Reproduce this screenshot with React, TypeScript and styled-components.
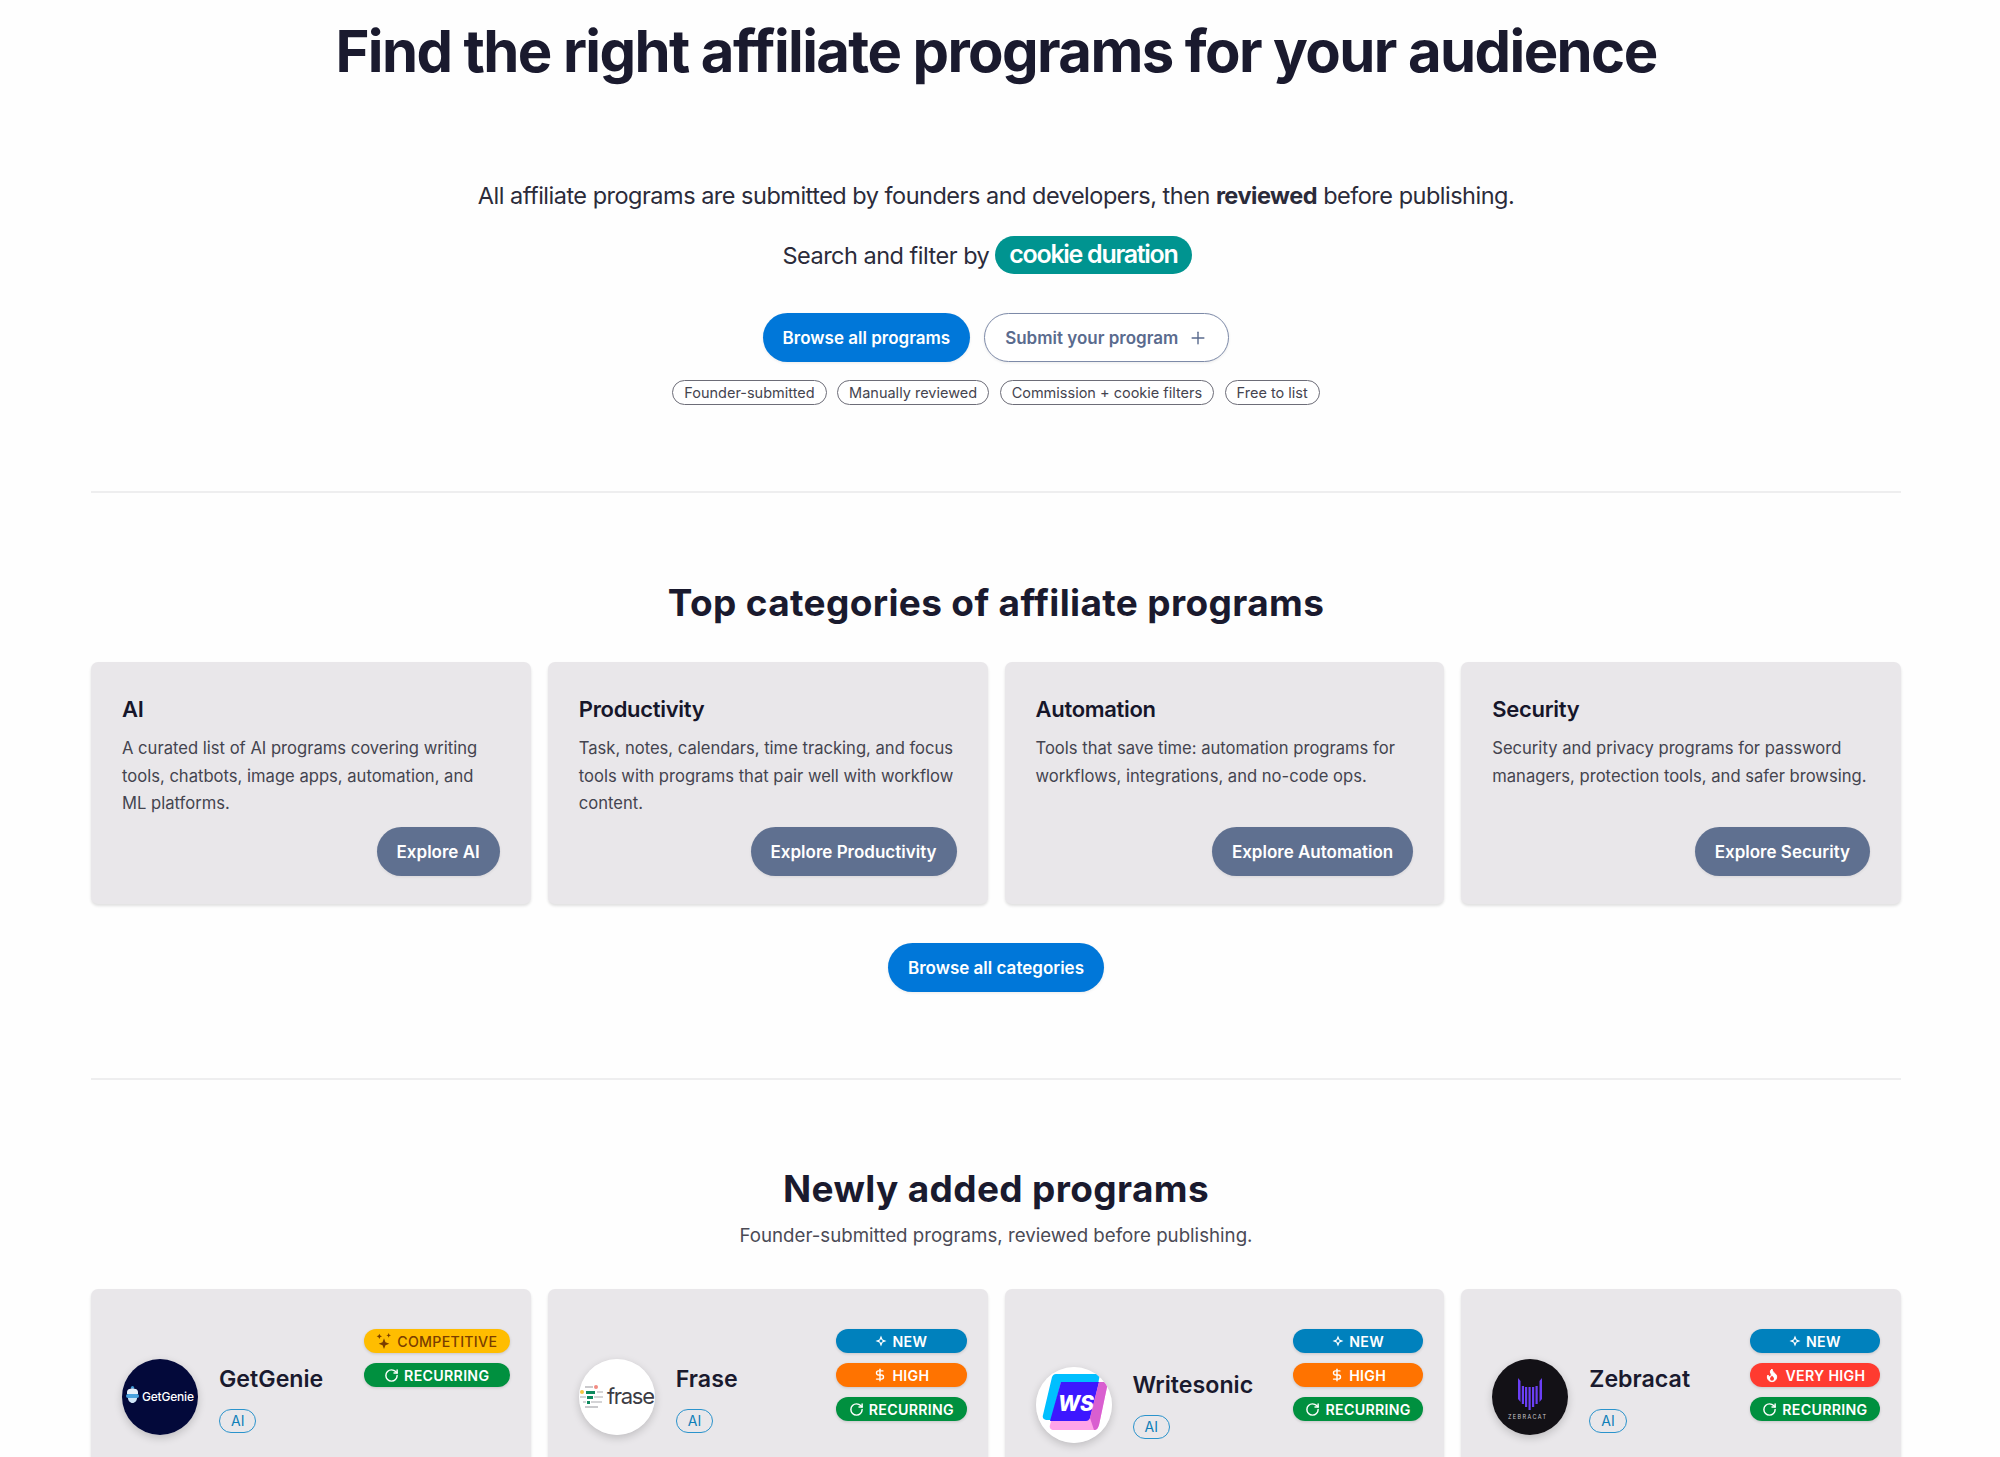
import React from 'react';
import styled, { createGlobalStyle } from 'styled-components';
import { Plus, RotateCw, DollarSign } from 'lucide-react';

type Tone = 'new' | 'high' | 'veryhigh' | 'recurring' | 'competitive';

const GlobalStyle = createGlobalStyle`
  html, body {
    margin: 0;
    height: 1457px;
    overflow: hidden;
    background: #fefefe;
    color: #1a1a2e;
    font-family: Inter, "Liberation Sans", sans-serif;
  }
  * { box-sizing: border-box; }
`;

const Page = styled.div`
  padding: 0 99px 0 91px;
`;

const Hero = styled.header`
  text-align: center;
  padding-top: 16px;
`;

const Title = styled.h1`
  margin: 0;
  font-size: 58px;
  line-height: 70px;
  font-weight: 700;
  letter-spacing: -1.6px;
  color: #1a1a2e;
`;

const Lead = styled.p`
  margin: 92px 0 0;
  font-size: 23.5px;
  line-height: 36px;
  letter-spacing: -0.5px;
  color: #2b2b3a;

  strong {
    font-weight: 700;
  }
`;

const SearchLine = styled.div`
  margin-top: 22px;
  padding-right: 18px;
  display: flex;
  justify-content: center;
  align-items: center;
  gap: 6px;
  font-size: 23.5px;
  letter-spacing: -0.5px;
  color: #2b2b3a;
`;

const Highlight = styled.span`
  background: #009490;
  color: #fff;
  font-weight: 600;
  font-size: 25px;
  letter-spacing: -1.3px;
  height: 38px;
  line-height: 37px;
  padding: 0 14px;
  border-radius: 19px;
`;

const ButtonRow = styled.div`
  margin-top: 39px;
  display: flex;
  justify-content: center;
  gap: 14px;
`;

const PillButton = styled.a<{ $variant: 'primary' | 'outline' | 'muted' }>`
  display: inline-flex;
  align-items: center;
  justify-content: center;
  gap: 10px;
  height: 49px;
  padding: 0 20px;
  border-radius: 25px;
  font-size: 17px;
  font-weight: 600;
  white-space: nowrap;
  box-shadow: 0 1px 3px rgba(0, 0, 0, 0.08);
  background: ${({ $variant }) =>
    $variant === 'primary' ? '#0077d9' : $variant === 'muted' ? '#5f7090' : '#fff'};
  color: ${({ $variant }) => ($variant === 'outline' ? '#5a6b8e' : '#fff')};
  border: ${({ $variant }) => ($variant === 'outline' ? '1px solid #7d8aa8' : 'none')};
`;

const ChipRow = styled.div`
  margin-top: 18px;
  display: flex;
  justify-content: center;
  gap: 10.5px;
`;

const Chip = styled.span`
  height: 25px;
  line-height: 23px;
  padding: 0 11px;
  border: 1px solid #6d6d78;
  border-radius: 13px;
  font-size: 14.5px;
  color: #44444f;
  background: #fff;
`;

const Divider = styled.hr<{ $top: number }>`
  margin: ${({ $top }) => $top}px 0 0;
  border: none;
  border-top: 2px solid #eeeeef;
`;

const SectionTitle = styled.h2<{ $top: number }>`
  margin: ${({ $top }) => $top}px 0 0;
  text-align: center;
  font-size: 37px;
  line-height: 46px;
  font-weight: 700;
  letter-spacing: 0.35px;
  color: #1a1a2e;
`;

const SectionNote = styled.p`
  margin: 10px 0 0;
  text-align: center;
  font-size: 18.7px;
  line-height: 28px;
  color: #4a4a55;
`;

const Grid = styled.div<{ $top: number }>`
  margin-top: ${({ $top }) => $top}px;
  display: grid;
  grid-template-columns: repeat(4, 1fr);
  gap: 17px;
`;

const Card = styled.article`
  background: #e9e7ea;
  border-radius: 7px;
  box-shadow: 0 2px 3px rgba(0, 0, 0, 0.12);
`;

const CategoryCard = styled(Card)`
  height: 242px;
  padding: 32px 31px 28px;
  display: flex;
  flex-direction: column;
`;

const CategoryName = styled.h3`
  margin: 0;
  font-size: 22px;
  line-height: 30px;
  font-weight: 600;
  letter-spacing: -0.3px;
  color: #16162a;
`;

const CategoryText = styled.p`
  margin: 11px 0 0;
  font-size: 16.6px;
  line-height: 27.7px;
  color: #44444f;
`;

const CardAction = styled.div`
  margin-top: auto;
  display: flex;
  justify-content: flex-end;
`;

const CenterRow = styled.div`
  margin-top: 39px;
  display: flex;
  justify-content: center;
`;

const ProgramCard = styled(Card)`
  height: 240px;
  padding: 40px 21px 0 31px;
  display: flex;
  justify-content: space-between;
  align-items: flex-start;
`;

const ProgramHead = styled.div<{ $shift: number }>`
  margin-top: ${({ $shift }) => 30 + $shift}px;
  display: flex;
  align-items: center;
  gap: 21px;
`;

const LogoCircle = styled.div`
  width: 76px;
  height: 76px;
  border-radius: 50%;
  overflow: hidden;
  flex: none;
  box-shadow: 0 3px 8px rgba(0, 0, 0, 0.18);
  svg {
    display: block;
  }
`;

const ProgramMeta = styled.div<{ $raised: boolean }>`
  padding-top: ${({ $raised }) => ($raised ? 0 : 3)}px;
  display: flex;
  flex-direction: column;
  align-items: flex-start;
  gap: 16px;
`;

const ProgramName = styled.div`
  font-size: 23.2px;
  line-height: 28px;
  font-weight: 600;
  color: #1a1a2e;
`;

const CategoryTag = styled.span`
  height: 24px;
  line-height: 22px;
  padding: 0 11px;
  border: 1px solid #2a93cc;
  border-radius: 12px;
  font-size: 14px;
  color: #0f7fb8;
`;

const BadgeStack = styled.div`
  display: flex;
  flex-direction: column;
  gap: 10px;
`;

const badgeBg: Record<Tone, string> = {
  new: '#0081bd',
  high: '#ff7300',
  veryhigh: '#ff3b30',
  recurring: '#00903f',
  competitive: '#ffbd00',
};

const Badge = styled.span<{ $tone: Tone }>`
  display: flex;
  align-items: center;
  justify-content: center;
  gap: 5px;
  height: 24px;
  padding: 0 12.5px;
  border-radius: 12px;
  font-size: 14.2px;
  font-weight: ${({ $tone }) => ($tone === 'competitive' ? 500 : 600)};
  letter-spacing: 0.3px;
  white-space: nowrap;
  background: ${({ $tone }) => badgeBg[$tone]};
  color: ${({ $tone }) => ($tone === 'competitive' ? '#7a3d00' : '#fff')};
  box-shadow: 0 1px 3px rgba(0, 0, 0, 0.15);
`;

const NewIcon = () => (
  <svg width="12" height="12" viewBox="0 0 24 24" fill="#fff" fillRule="evenodd">
    <path d="M12 1l3.2 7.8L23 12l-7.8 3.2L12 23l-3.2-7.8L1 12l7.8-3.2zM12 8.5L10.2 10.2 8.5 12l1.7 1.8 1.8 1.7 1.8-1.7 1.7-1.8-1.7-1.8z" />
  </svg>
);

const SparkIcon = () => (
  <svg width="16" height="16" viewBox="0 0 24 24" fill="#7a3d00">
    <path d="M12 8l2.2 5.8L20 16l-5.8 2.2L12 24l-2.2-5.8L4 16l5.8-2.2z" />
    <path d="M5 1l1.2 2.8L9 5 6.2 6.2 5 9 3.8 6.2 1 5l2.8-1.2z" />
    <path d="M19 0l1 2.5 2.5 1-2.5 1-1 2.5-1-2.5-2.5-1 2.5-1z" />
  </svg>
);

const FlameIcon = () => (
  <svg width="16" height="16" viewBox="0 0 24 24">
    <path
      d="M8.5 14.5A2.5 2.5 0 0 0 11 12c0-1.38-.5-2-1-3-1.072-2.143-.224-4.054 2-6 .5 2.5 2 4.9 4 6.5 2 1.6 3 3.5 3 5.5a7 7 0 1 1-14 0c0-1.153.433-2.294 1-3a2.5 2.5 0 0 0 2.5 2.5z"
      fill="#fff"
      stroke="#fff"
      strokeWidth="1.5"
    />
    <path d="M12 13c1.8 1.6 3 3 3 4.6a3 3 0 0 1-6 0c0-1.6 1.4-3 3-4.6z" fill="#ff3b30" />
  </svg>
);

const badgeIcon = (tone: Tone) => {
  if (tone === 'new') return <NewIcon />;
  if (tone === 'competitive') return <SparkIcon />;
  if (tone === 'high') return <DollarSign size={14} strokeWidth={2.4} />;
  if (tone === 'veryhigh') return <FlameIcon />;
  return <RotateCw size={15} strokeWidth={2.3} />;
};

const badgeLabel: Record<Tone, string> = {
  new: 'NEW',
  high: 'HIGH',
  veryhigh: 'VERY HIGH',
  recurring: 'RECURRING',
  competitive: 'COMPETITIVE',
};

const GetGenieLogo = () => (
  <svg width="76" height="76" viewBox="0 0 76 76">
    <rect width="76" height="76" fill="#03093a" />
    <circle cx="10.5" cy="28.5" r="1.6" fill="#3f9bd8" />
    <path d="M5 33c0-2.5 2.5-3.5 5.5-3.5S16 30.500 16 33v2H5z" fill="#e6f1fa" />
    <rect x="4" y="35" width="13" height="4" rx="2" fill="#4aa3df" />
    <path d="M6 39h9c0 2.500-2 5-4.500 5S6 41.500 6 39z" fill="#cfe6f7" />
    <text x="20" y="42" fontFamily="Inter, sans-serif" fontSize="12" fontWeight="500" fill="#fff" textLength="52">
      GetGenie
    </text>
  </svg>
);

const FraseLogo = () => (
  <svg width="76" height="76" viewBox="0 0 76 76">
    <rect width="76" height="76" fill="#fff" />
    <rect x="6" y="27" width="8" height="2" fill="#c9c9cc" />
    <circle cx="17" cy="28" r="2" fill="#f28b82" />
    <circle cx="3" cy="33" r="2" fill="#f5c542" />
    <rect x="7" y="32" width="9" height="3" fill="#0f8a5f" />
    <rect x="18" y="32" width="6" height="2" fill="#d4d4d6" />
    <rect x="1" y="37" width="6" height="2" fill="#d4d4d6" />
    <rect x="8" y="37" width="6" height="3" fill="#0f8a5f" />
    <rect x="15" y="37" width="9" height="2" fill="#d4d4d6" />
    <rect x="4" y="42" width="3" height="2" fill="#d4d4d6" />
    <rect x="8" y="42" width="3" height="3" fill="#0f8a5f" />
    <rect x="12" y="42" width="11" height="2" fill="#d4d4d6" />
    <rect x="6" y="47" width="13" height="2" fill="#c9c9cc" />
    <text x="28" y="45" fontFamily="Inter, sans-serif" fontSize="22" fill="#3c3c44" textLength="48">
      frase
    </text>
  </svg>
);

const WritesonicLogo = () => (
  <svg width="76" height="76" viewBox="0 0 76 76">
    <rect width="76" height="76" fill="#fff" />
    <path d="M20 7h40c3 0 4 2 3 5l-7 38c-1 2-2 3-4 3H12c-4 0-6-2-5-5L16 10c1-2 2-3 4-3z" fill="#00bfff" />
    <path d="M25 15h43c3 0 4 2 3 5l-8 38c-1 3-2 5-5 5H18c-3 0-5-2-4-5z" fill="#ffa3e8" />
    <path d="M25 15h38l-9 36c-1 2-2 3-4 3H14z" fill="#3d17ff" />
    <path d="M63 15h5c3 0 4 2 3 5l-8 38c-1 3-2 5-5 5l-4-12z" fill="#d95fd0" />
    <text x="22" y="44" fontFamily="Inter, sans-serif" fontSize="21" fontWeight="800" fontStyle="italic" fill="#fff">
      WS
    </text>
  </svg>
);

const ZebracatLogo = () => (
  <svg width="76" height="76" viewBox="0 0 76 76">
    <rect width="76" height="76" fill="#131116" />
    <g fill="#6b3ff5">
      <path d="M26 19l2.500 3v21l-2.500-3z" />
      <rect x="29.800" y="27" width="2.200" height="18" />
      <rect x="33" y="28" width="2.200" height="20" />
      <rect x="36.500" y="28" width="2.200" height="23" />
      <rect x="40" y="28" width="2.200" height="20" />
      <rect x="43.500" y="27" width="2.200" height="18" />
      <path d="M50 19l-2.500 3v21l2.500-3z" />
    </g>
    <text x="16" y="60" fontFamily="Inter, sans-serif" fontSize="5.500" fill="#c8c8cc" letterSpacing="1.4">
      ZEBRACAT
    </text>
  </svg>
);

const categories = [
  {
    name: 'AI',
    text: 'A curated list of AI programs covering writing tools, chatbots, image apps, automation, and ML platforms.',
  },
  {
    name: 'Productivity',
    text: 'Task, notes, calendars, time tracking, and focus tools with programs that pair well with workflow content.',
  },
  {
    name: 'Automation',
    text: 'Tools that save time: automation programs for workflows, integrations, and no-code ops.',
  },
  {
    name: 'Security',
    text: 'Security and privacy programs for password managers, protection tools, and safer browsing.',
  },
];

const programs: { name: string; logo: React.ReactNode; badges: Tone[]; shift: number }[] = [
  { name: 'GetGenie', logo: <GetGenieLogo />, badges: ['competitive', 'recurring'], shift: 0 },
  { name: 'Frase', logo: <FraseLogo />, badges: ['new', 'high', 'recurring'], shift: 0 },
  { name: 'Writesonic', logo: <WritesonicLogo />, badges: ['new', 'high', 'recurring'], shift: 8 },
  { name: 'Zebracat', logo: <ZebracatLogo />, badges: ['new', 'veryhigh', 'recurring'], shift: 0 },
];

const App: React.FC = () => (
  <Page>
    <GlobalStyle />
    <Hero>
      <Title>Find the right affiliate programs for your audience</Title>
      <Lead>
        All affiliate programs are submitted by founders and developers, then <strong>reviewed</strong> before
        publishing.
      </Lead>
      <SearchLine>
        Search and filter by <Highlight>cookie duration</Highlight>
      </SearchLine>
      <ButtonRow>
        <PillButton $variant="primary">Browse all programs</PillButton>
        <PillButton $variant="outline">
          Submit your program <Plus size={20} strokeWidth={1.7} />
        </PillButton>
      </ButtonRow>
      <ChipRow>
        <Chip>Founder-submitted</Chip>
        <Chip>Manually reviewed</Chip>
        <Chip>Commission + cookie filters</Chip>
        <Chip>Free to list</Chip>
      </ChipRow>
    </Hero>

    <Divider $top={86} />

    <section>
      <SectionTitle $top={87}>Top categories of affiliate programs</SectionTitle>
      <Grid $top={36}>
        {categories.map((c) => (
          <CategoryCard key={c.name}>
            <CategoryName>{c.name}</CategoryName>
            <CategoryText>{c.text}</CategoryText>
            <CardAction>
              <PillButton $variant="muted">Explore {c.name}</PillButton>
            </CardAction>
          </CategoryCard>
        ))}
      </Grid>
      <CenterRow>
        <PillButton $variant="primary">Browse all categories</PillButton>
      </CenterRow>
    </section>

    <Divider $top={86} />

    <section>
      <SectionTitle $top={86}>Newly added programs</SectionTitle>
      <SectionNote>Founder-submitted programs, reviewed before publishing.</SectionNote>
      <Grid $top={39}>
        {programs.map((p) => (
          <ProgramCard key={p.name}>
            <ProgramHead $shift={p.shift}>
              <LogoCircle>{p.logo}</LogoCircle>
              <ProgramMeta $raised={p.shift > 0}>
                <ProgramName>{p.name}</ProgramName>
                <CategoryTag>AI</CategoryTag>
              </ProgramMeta>
            </ProgramHead>
            <BadgeStack>
              {p.badges.map((b) => (
                <Badge key={b} $tone={b}>
                  {badgeIcon(b)}
                  {badgeLabel[b]}
                </Badge>
              ))}
            </BadgeStack>
          </ProgramCard>
        ))}
      </Grid>
    </section>
  </Page>
);

export default App;
